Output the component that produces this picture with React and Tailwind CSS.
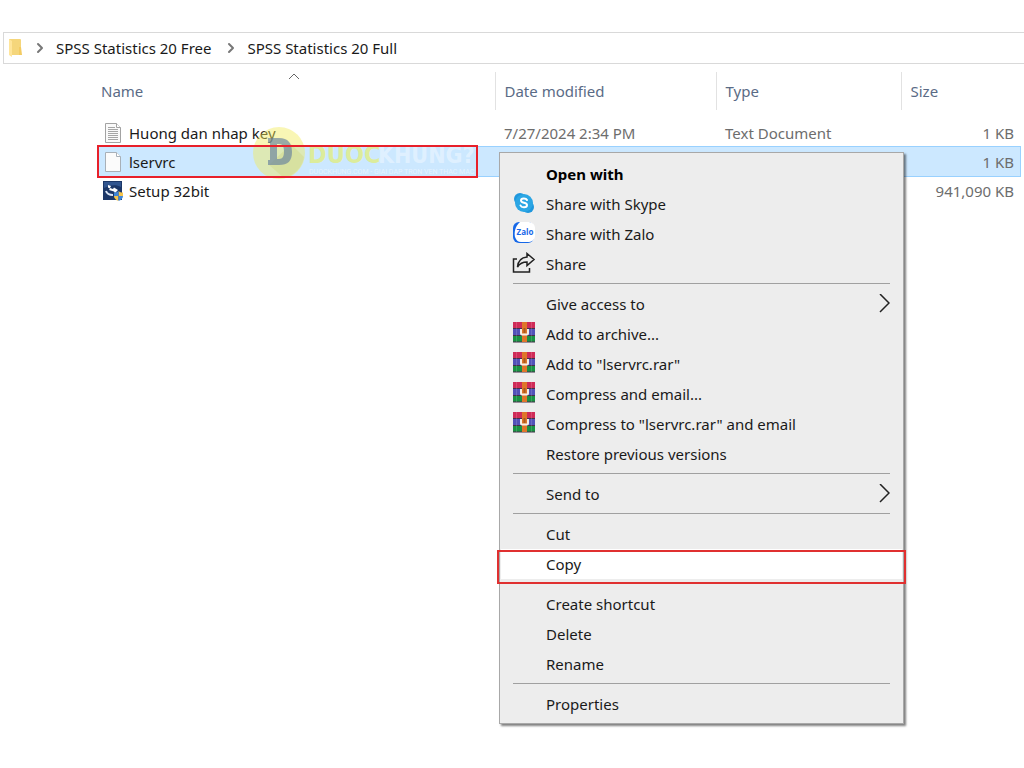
import React from 'react';
import { ChevronRight } from 'lucide-react';

const FolderIcon = () => (
    <svg className="w-4 h-5" viewBox="0 0 16 20" aria-hidden="true">
        <path d="M1 1h11a1 1 0 0 1 1 1v15H1z" fill="#f5d67b" />
        <path d="M11 9h2l1 8h-3z" fill="#f3cb62" />
        <path d="M1 1l3 2v16l-3-2z" fill="#ffe59a" />
    </svg>
);

const TextFileIcon = () => (
    <svg className="w-5 h-5" viewBox="0 0 20 20" aria-hidden="true">
        <path d="M2.5.5h11l4 4v15h-15z" fill="#fafafa" stroke="#a3a3a3" />
        <path d="M13.5.5v4h4" fill="#fff" stroke="#a3a3a3" />
        <path d="M5 4.5h7M5 6.500h10M5 8.500h10M5 10.500h10M5 12.500h10M5 14.500h10M5 16.500h10" stroke="#a6a6a6" />
    </svg>
);

const BlankFileIcon = () => (
    <svg className="w-5 h-5" viewBox="0 0 20 20" aria-hidden="true">
        <path d="M2.5.5h11l4 4v15h-15z" fill="#fbfbfb" stroke="#a8b0b8" />
        <path d="M13.5.5v4h4" fill="#fff" stroke="#a8b0b8" />
    </svg>
);

const SetupIcon = () => (
    <svg className="w-5 h-5" viewBox="0 0 20 20" aria-hidden="true">
        <rect x="0" y="0" width="19" height="19" fill="#1c3768" />
        <path d="M1 1h17v5c-5-3-11-2-17 1z" fill="#31558f" />
        <path d="M5 4l3 1-1 2 3 1 1-1.500 4 2.500-3 3-1-1.500-5-1.500 1-1.500-2-1z" fill="#fff" />
        <path d="M3 10c1 3 3 4 7 4" fill="none" stroke="#dce6f5" strokeWidth="2" />
        <path d="M15.500 10v5H20v-3.500c-2 0-3-.5-4.500-1.500z" fill="#f5c44c" />
        <path d="M15.500 10v5H11v-3.500c2 0 3-.5 4.500-1.500z" fill="#3f86d8" />
        <path d="M15.500 15H11c0 2.500 2 4 4.500 5z" fill="#f5c44c" />
        <path d="M15.500 15H20c0 2.500-2 4-4.500 5z" fill="#3f86d8" />
    </svg>
);

const SkypeIcon = () => (
    <svg className="w-6 h-6" viewBox="0 0 24 24" aria-hidden="true">
        <circle cx="8" cy="7" r="6" fill="#1f97dd" />
        <circle cx="16" cy="15" r="6" fill="#1f97dd" />
        <circle cx="12" cy="11" r="9" fill="#2ba6e4" />
        <path d="M15 8c-1-2-6-2-6 .5 0 3 6 1.500 6 4.500 0 3-5.500 3-6.500.5" fill="none" stroke="#fff" strokeWidth="2" strokeLinecap="round" />
    </svg>
);

const ZaloIcon = () => (
    <svg className="w-6 h-6" viewBox="0 0 24 24" aria-hidden="true">
        <rect x="1" y="0" width="21" height="21" rx="6" fill="#1668e8" />
        <path d="M8 0h9a6 6 0 0 1 6 6v8a6 6 0 0 1-6 6H9c-3 0-5-2-6-5-1-4 0-11 5-15z" fill="#fff" />
        <text x="13" y="13" textAnchor="middle" fontSize="8" fontWeight="700" fontFamily="Open Sans, sans-serif" fill="#1668e8">Zalo</text>
    </svg>
);

const ShareIcon = () => (
    <svg className="w-6 h-6" viewBox="0 0 24 24" fill="none" stroke="#222" strokeWidth="1.500" aria-hidden="true">
        <path d="M5 7H1.500v13h16v-4" />
        <path d="M15 1.500l7 6-7 6v-3.500c-4 0-7 1-9.500 5C6 9.500 9 5.500 15 5z" />
    </svg>
);

const RarIcon = () => (
    <svg className="w-6 h-6" viewBox="0 0 24 24" aria-hidden="true">
        <rect x="1" y="0" width="22" height="7" fill="#cf2b57" />
        <rect x="1" y="7" width="22" height="7" fill="#5352b8" />
        <rect x="1" y="14" width="22" height="6" fill="#1a9142" />
        <path d="M1 6.500h22M1 13.500h22M1 20h22" stroke="#45304a" />
        <path d="M4.500 0v20M19.500 0v20" stroke="#fff" strokeOpacity=".15" />
        <rect x="10" y="0" width="5" height="20" fill="#e0762a" />
        <path d="M9 7v4.500a1 1 0 0 0 1 1h5a1 1 0 0 0 1-1V7" fill="none" stroke="#f6efe6" strokeWidth="2" />
        <path d="M12.500 6v5" stroke="#a85a20" strokeWidth="2" />
    </svg>
);

const files = [
    { name: 'Huong dan nhap key', icon: TextFileIcon, date: '7/27/2024 2:34 PM', type: 'Text Document', size: '1 KB' },
    { name: 'lservrc', icon: BlankFileIcon, size: '1 KB', selected: true },
    { name: 'Setup 32bit', icon: SetupIcon, size: '941,090 KB' },
];

// each inner list is one group, groups are split by a line
const menuGroups = [
    [
        { label: 'Open with', bold: true },
        { label: 'Share with Skype', icon: SkypeIcon },
        { label: 'Share with Zalo', icon: ZaloIcon },
        { label: 'Share', icon: ShareIcon },
    ],
    [
        { label: 'Give access to', submenu: true },
        { label: 'Add to archive...', icon: RarIcon },
        { label: 'Add to "lservrc.rar"', icon: RarIcon },
        { label: 'Compress and email...', icon: RarIcon },
        { label: 'Compress to "lservrc.rar" and email', icon: RarIcon },
        { label: 'Restore previous versions' },
    ],
    [{ label: 'Send to', submenu: true }],
    [{ label: 'Cut' }, { label: 'Copy', marked: true }],
    [{ label: 'Create shortcut' }, { label: 'Delete' }, { label: 'Rename' }],
    [{ label: 'Properties' }],
];

const Breadcrumb = () => (
    <nav className="mt-8 ml-[3px] h-8 border border-r-0 border-[#d9d9d9] flex items-center pl-1 text-[#1a1a1a]">
        <FolderIcon />
        <ChevronRight className="w-4 h-4 mx-2 text-[#777]" strokeWidth={3} />
        <a href="#free">SPSS Statistics 20 Free</a>
        <ChevronRight className="w-4 h-4 ml-3 mr-2 text-[#777]" strokeWidth={3} />
        <a href="#full">SPSS Statistics 20 Full</a>
    </nav>
);

const FileTable = () => (
    <div className="mt-2 ml-[98px] mr-1">
        <table className="w-full table-fixed border-collapse">
            <colgroup>
                <col className="w-[397px]" />
                <col className="w-[221px]" />
                <col className="w-[185px]" />
                <col />
            </colgroup>
            <thead>
                <tr className="h-[38px] text-left text-[#5a6b86]">
                    <th className="relative p-0 pl-[3px] font-normal">
                        Name
                        <svg className="absolute left-[190px] top-0 w-3 h-2" viewBox="0 0 12 8" fill="none" stroke="#666" aria-hidden="true">
                            <path d="M1 7l5-5 5 5" />
                        </svg>
                    </th>
                    <th className="p-0 pl-[9px] font-normal border-l border-[#e2e2e2]">Date modified</th>
                    <th className="p-0 pl-[9px] font-normal border-l border-[#e2e2e2]">Type</th>
                    <th className="p-0 pl-[9px] font-normal border-l border-[#e2e2e2]">Size</th>
                </tr>
            </thead>
            <tbody className="text-[#6d6d6d]">
                <tr className="h-2" aria-hidden="true"><td colSpan={4} className="p-0" /></tr>
                {files.map((file) => (
                    <tr
                        key={file.name}
                        className={file.selected ? 'h-[29px] bg-[#cce8ff] outline outline-1 outline-[#99d1ff]' : 'h-[29px]'}
                    >
                        <td className="relative p-0 pl-[5px] text-[#1a1a1a]">
                            <div className="flex items-center gap-[6px]">
                                <file.icon />
                                <span>{file.name}</span>
                            </div>
                            {file.selected && (
                                <span className="absolute z-10 -left-px -top-[2px] -bottom-[2px] w-[381px] border-2 border-[#e8202a]" />
                            )}
                        </td>
                        <td className="p-0 pl-[9px]">{file.date}</td>
                        <td className="p-0 pl-[9px]">{file.type}</td>
                        <td className="p-0 pr-[6px] text-right">{file.size}</td>
                    </tr>
                ))}
            </tbody>
        </table>
    </div>
);

const Watermark = () => (
    <svg className="absolute left-[252px] top-[126px] w-[224px] h-[54px] pointer-events-none" viewBox="0 0 224 54" aria-hidden="true">
        <circle cx="27" cy="27" r="26" fill="#f2ec5c" fillOpacity=".45" />
        <path d="M39 18l13 13a26 26 0 0 1-20 21L17 39z" fill="#c9cf70" fillOpacity=".3" />
        <path d="M16 12h11c9 0 13 5 13 14s-4 13-13 13H16v-5h2V17h-2zm9 6v15h2c4 0 5-3 5-7.500S31 18 27 18z" fill="#65809c" fillOpacity=".65" fillRule="evenodd" />
        <g fontFamily="DejaVu Sans Condensed, Roboto, sans-serif" fontWeight="700">
            <text x="56" y="37" fontSize="25" fill="#e2ee7c" fillOpacity=".75">DUOC</text>
            <text x="126" y="37" fontSize="23" fill="#fff" fillOpacity=".4">KHUNG?</text>
        </g>
        <text x="57" y="48" fontSize="7" fontFamily="Roboto, sans-serif" fill="#fff" fillOpacity=".5">DUOCKHUNG.COM - GIAI DAP TRON VEN THAC MAC</text>
    </svg>
);

const MenuItem = ({ item }) => (
    <button
        role="menuitem"
        className={`relative flex items-center w-full h-[30px] pl-[11px] pr-3 text-left ${item.marked ? 'bg-white' : ''}`}
    >
        <span className="w-6 shrink-0">{item.icon && <item.icon />}</span>
        <span className={`ml-[10px] flex-1 whitespace-nowrap ${item.bold ? 'font-bold text-black' : ''}`}>{item.label}</span>
        {item.submenu && (
            <svg className="w-3 h-5" viewBox="0 0 12 20" fill="none" stroke="#222" strokeWidth="1.500" aria-hidden="true">
                <path d="M2 0l9 9-9 9" />
            </svg>
        )}
        {item.marked && <span className="absolute -left-1 -right-1 top-px -bottom-[5px] border-2 border-[#e03030]" />}
    </button>
);

const ContextMenu = () => (
    <div
        role="menu"
        className="absolute left-[499px] top-[152px] w-[405px] px-px pt-[6px] pb-1 bg-[#ededed] border border-[#a8a8a8] shadow-[2px_2px_2px_rgba(0,0,0,0.5)] text-[#1a1a1a]"
    >
        {menuGroups.map((group, i) => (
            <React.Fragment key={group[0].label}>
                {i > 0 && (
                    <div className="h-[10px] px-3 pt-1">
                        <div className={`w-full h-px ${group[0].label === 'Create shortcut' ? '' : 'bg-[#a0a0a0]'}`} />
                    </div>
                )}
                {group.map((item) => <MenuItem key={item.label} item={item} />)}
            </React.Fragment>
        ))}
    </div>
);

export default function App() {
    return (
        <main className="relative flow-root min-h-screen bg-white font-['Noto_Sans','Open_Sans',sans-serif] text-[15px] leading-5">
            <Breadcrumb />
            <FileTable />
            <Watermark />
            <ContextMenu />
        </main>
    );
}
